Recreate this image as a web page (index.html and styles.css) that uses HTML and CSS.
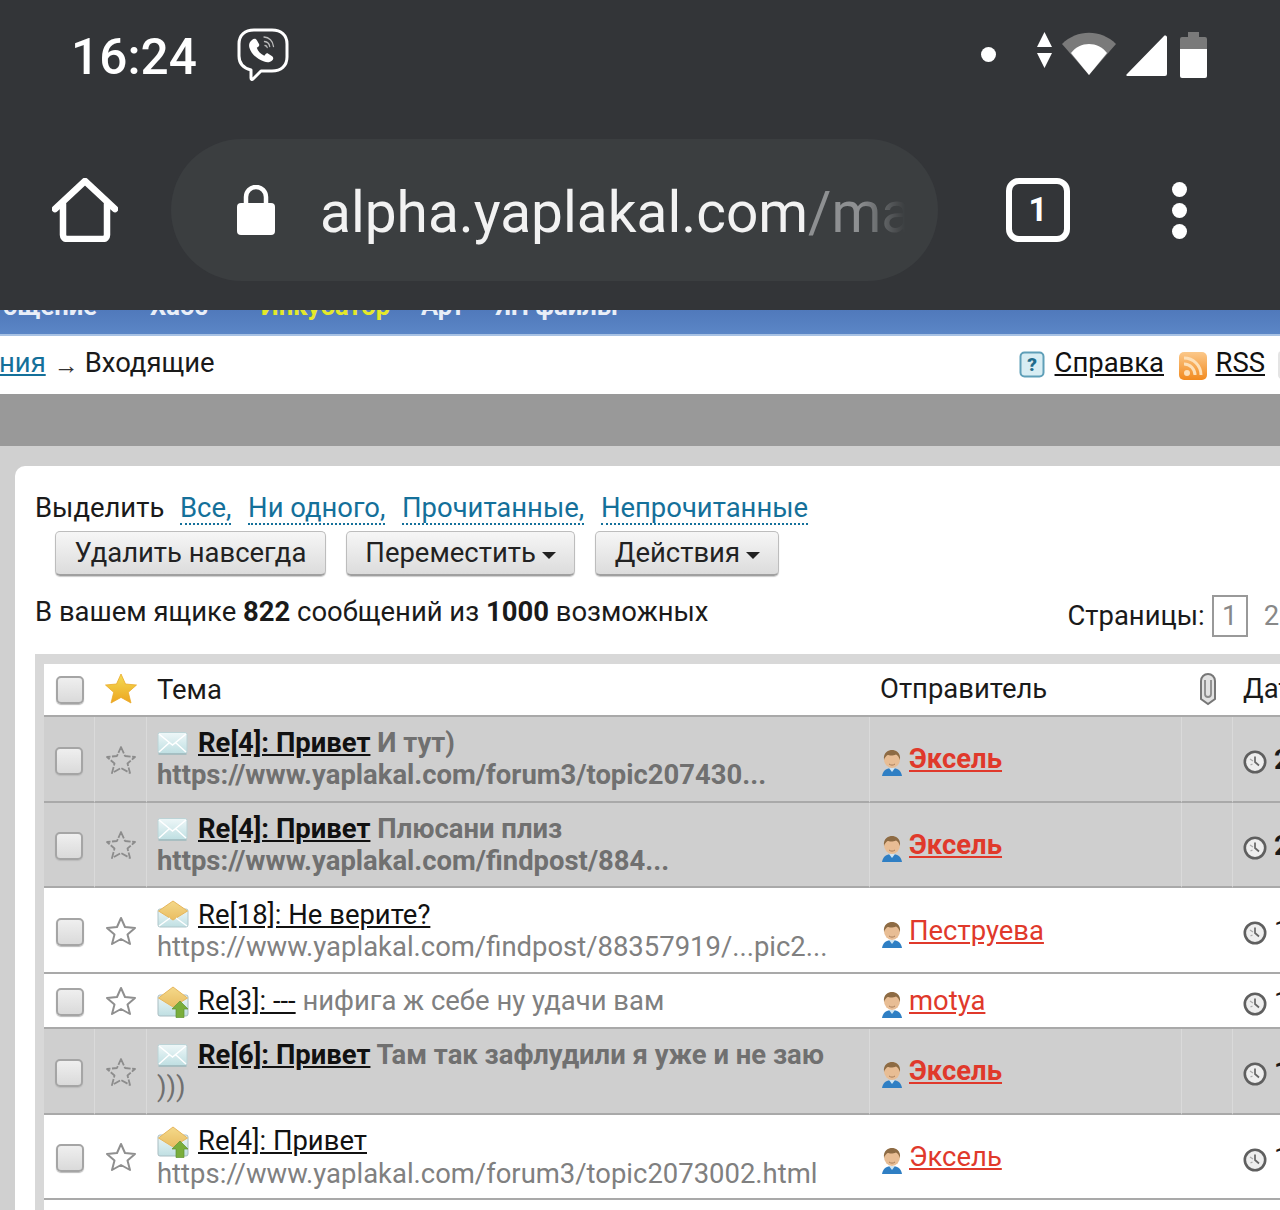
FILE: index.html
```html
<!DOCTYPE html>
<html lang="ru">
<head>
<meta charset="utf-8">
<title>Входящие</title>
<link rel="stylesheet" href="styles.css">
</head>
<body>
<svg class="defs" aria-hidden="true">
  <defs>
    <linearGradient id="gold" x1="0" y1="0" x2="0" y2="1"><stop offset="0" stop-color="#f3dc55"/><stop offset="1" stop-color="#eda51f"/></linearGradient>
    <linearGradient id="env" x1="0" y1="0" x2="0" y2="1"><stop offset="0" stop-color="#eef7f8"/><stop offset="1" stop-color="#bfdfe2"/></linearGradient>
    <linearGradient id="flap" x1="0" y1="0" x2="0" y2="1"><stop offset="0" stop-color="#f4d98a"/><stop offset="1" stop-color="#e9bd62"/></linearGradient>
    <linearGradient id="rss" x1="0" y1="0" x2="0" y2="1"><stop offset="0" stop-color="#fbc88a"/><stop offset="1" stop-color="#f28a1e"/></linearGradient>
    <symbol id="i-star" viewBox="0 0 32 32"><path d="M16 3l4 9 10 1-7.500 6.500L25 29l-9-5-9 5 2.500-9.500L2 13l10-1z" fill="none" stroke="#8f8f8f" stroke-width="2" stroke-linejoin="round"/></symbol>
    <symbol id="i-star-dim" viewBox="0 0 32 32"><path d="M16 3l4 9 10 1-7.500 6.500L25 29l-9-5-9 5 2.500-9.500L2 13l10-1z" fill="none" stroke="#8c8c8c" stroke-width="1.800" stroke-dasharray="7 1.500" stroke-linejoin="round"/></symbol>
    <symbol id="i-star-gold" viewBox="0 0 32 32"><path d="M16 1l4.500 10 11 1-8.200 7.300L26 30l-10-5.600L6 30l2.700-10.700L.5 12l11-1z" fill="url(#gold)" stroke="#eba928" stroke-width=".8" stroke-linejoin="round"/></symbol>
    <symbol id="i-mail" viewBox="0 0 31 25"><rect x="1" y="1.500" width="29" height="21" rx="2" fill="url(#env)" stroke="#bcd3d6"/><path d="M2 3l13.500 11L29 3M2 21l10-9M29 21l-10-9" fill="none" stroke="#fff" stroke-width="1.500"/><path d="M1.500 23h28" stroke="#9db9bc" stroke-width="1.500"/></symbol>
    <symbol id="i-open" viewBox="0 0 32 28"><rect x="1" y="9" width="30" height="18" rx="2" fill="url(#env)" stroke="#b0c6ca"/><path d="M1.500 11L16 1l14.500 10L16 20z" fill="url(#flap)" stroke="#e6b65c" stroke-linejoin="round"/><path d="M2 26l11-8M30 26l-11-8" stroke="#fff" stroke-width="1.500"/></symbol>
    <symbol id="i-reply" viewBox="0 0 32 32"><rect x="1" y="9" width="30" height="21" rx="2" fill="url(#env)" stroke="#a9bdc2"/><path d="M1.500 12L16 1l14.500 11L16 21z" fill="url(#flap)" stroke="#e6b65c" stroke-linejoin="round"/><path d="M23 15l8 8h-4v8.500h-8V23h-4z" fill="#79ad3b" stroke="#5f9430" stroke-width=".7"/></symbol>
    <symbol id="i-user" viewBox="0 0 24 28"><path d="M2 27c1-6 5-8 10-8s9 2 10 8z" fill="#2f7fc4"/><path d="M9 19l3 4 3-4z" fill="#cfe4f2"/><ellipse cx="12" cy="10" rx="8" ry="9" fill="#e8bd94"/><path d="M4 11C3 3 9 1 12 1s9 2 8 10c-1-3-2.500-5-4-5.500-3 1.500-7 1-8.500.5-1 1-3 2.500-3.500 5z" fill="#8d6b44"/><path d="M9 15c2 1.500 4 1.500 6 0" stroke="#a97f5c" fill="none"/></symbol>
    <symbol id="i-clock" viewBox="0 0 24 24"><circle cx="12" cy="12" r="10.200" fill="#eeeeee" stroke="#5f5f5f" stroke-width="2.600"/><path d="M12 6.500V12l4 3.500" fill="none" stroke="#666" stroke-width="1.700"/><path d="M7 9l3 2M7.500 15l2-1" stroke="#aaa" stroke-width="1.300"/></symbol>
    <symbol id="i-clip" viewBox="0 0 20 34"><path d="M3 9a7 7 0 0 1 14 0v18l-7 5-7-5z" fill="#e2e2e2" stroke="#777" stroke-width="2"/><path d="M7 8v14a3 3 0 0 0 6 0V8" fill="none" stroke="#8a8a8a" stroke-width="1.800"/></symbol>
  </defs>
</svg>

<header class="chrome">
  <div class="status">
    <span class="time">16:24</span>
    <svg class="viber" viewBox="0 0 52 54"><path d="M17 2h18c9 0 15 5 15 14v13c0 9-6 14-15 14H24l-8 8c-1 1-2 .5-2-1v-8C6 40 2 36 2 28V16C2 7 8 2 17 2z" fill="none" stroke="#fff" stroke-width="3" stroke-linejoin="round"/><path d="M15 12c2-2 4-1.500 5 .5l2 3.500c.5 1 .3 2-.7 2.700l-1.500 1c1 3.500 4 6.500 7.500 8l1.200-1.500c.8-1 1.800-1.100 2.800-.5l3.500 2.200c1.800 1.200 2 3 .3 4.600-2 2-5 2.300-8 1C19 31 14 25 12.500 20c-1-3-.3-6 2.500-8z" fill="#fff"/><path d="M27 9c5 .3 9 4 9.500 9.500M27.500 13.500c3 .3 4.800 2 5.200 5M28 17.500c1.300.2 2 .9 2.200 2" fill="none" stroke="#bbb" stroke-width="1.300" stroke-linecap="round"/></svg>
    <div class="sysicons">
      <span class="dot"></span>
      <svg class="ic-arrows" viewBox="0 0 17 36"><path d="M8.500 0L16 15H1zM1 21h15L8.500 36z" fill="#fff"/></svg>
      <svg class="ic-wifi" viewBox="0 0 54 43"><path d="M0 12C15-3 39-3 54 12L27 43z" fill="#7a7a7a"/><path d="M9 21C18 9 36 9 45 21L27 43z" fill="#fff"/></svg>
      <svg class="ic-signal" viewBox="0 0 41 41"><path d="M41 2v37a2 2 0 0 1-2 2H2a1 1 0 0 1-1-2L38 1c1-1 3 0 3 1z" fill="#fff"/></svg>
      <svg class="ic-batt" viewBox="0 0 27 46"><path d="M8 0h11v5h6a2 2 0 0 1 2 2v10H0V7a2 2 0 0 1 2-2h6z" fill="#7a7a7a"/><path d="M0 17h27v27a2 2 0 0 1-2 2H2a2 2 0 0 1-2-2z" fill="#fff"/></svg>
    </div>
  </div>
  <div class="toolbar">
    <svg class="ic-home" viewBox="0 0 66 64"><path d="M3 31L33 3l30 28M11 26v31a4 4 0 0 0 4 4h36a4 4 0 0 0 4-4V26" fill="none" stroke="#fff" stroke-width="6.500" stroke-linecap="round" stroke-linejoin="round"/></svg>
    <div class="pill">
      <svg class="ic-lock" viewBox="0 0 38 50"><path d="M9 20v-8a10 10 0 0 1 20 0v8" fill="none" stroke="#fff" stroke-width="4.500"/><rect y="18" width="38" height="32" rx="4" fill="#fff"/></svg>
      <span class="url">alpha.yaplakal.com<span class="url-path">/mail/inbox</span></span>
    </div>
    <span class="tabs">1</span>
    <div class="menu"><span></span><span></span><span></span></div>
  </div>
</header>

<nav class="topnav">
  <a class="nav-wide">ощение</a>
  <a class="nav-wide">Хаос</a>
  <a class="nav-hot">Инкубатор</a>
  <a>Арт</a>
  <a>ЯП файлы</a>
</nav>

<div class="crumbs">
  <div class="crumb-left"><a class="teal">ния</a><span class="arrow">→</span><span>Входящие</span></div>
  <div class="crumb-right">
    <svg class="ic-help" viewBox="0 0 26 28"><rect x="1.500" y="1.500" width="23" height="24" rx="4" fill="#d8edf3" stroke="#5f9fb8" stroke-width="2"/><text x="13" y="20" class="help-q">?</text></svg>
    <a class="ink">Справка</a>
    <svg class="ic-rss" viewBox="0 0 28 28"><rect width="28" height="28" rx="5" fill="url(#rss)"/><circle cx="8" cy="21" r="3" fill="#fde0b8"/><path d="M5 12a11 11 0 0 1 11 11M5 6a17 17 0 0 1 17 17" fill="none" stroke="#fde0b8" stroke-width="3"/></svg>
    <a class="ink">RSS</a>
    <span class="ic-next"></span>
  </div>
</div>

<div class="graybar"></div>

<main class="page">
  <section class="panel">
    <div class="select-row">
      <span class="select-label">Выделить</span>
      <a class="dotted">Все,</a>
      <a class="dotted">Ни одного,</a>
      <a class="dotted">Прочитанные,</a>
      <a class="dotted">Непрочитанные</a>
    </div>
    <div class="actions">
      <button class="btn">Удалить навсегда</button>
      <button class="btn">Переместить<i class="caret"></i></button>
      <button class="btn">Действия<i class="caret"></i></button>
    </div>
    <div class="info-row">
      <p class="info">В вашем ящике <b>822</b> сообщений из <b>1000</b> возможных</p>
      <div class="pager"><span>Страницы:</span><span class="page-cur">1</span><span class="page-num">2</span></div>
    </div>
    <div class="table-wrap">
      <table class="mail">
        <colgroup><col class="c-check"><col class="c-star"><col class="c-subj"><col class="c-from"><col class="c-att"><col class="c-date"></colgroup>
        <thead>
          <tr>
            <th class="center"><span class="box"></span></th>
            <th class="center"><svg class="star"><use href="#i-star-gold"/></svg></th>
            <th class="subj">Тема</th>
            <th class="from">Отправитель</th>
            <th class="center"><svg class="clip"><use href="#i-clip"/></svg></th>
            <th class="date">Дата</th>
          </tr>
        </thead>
        <tbody>
          <tr class="unread">
            <td class="center"><span class="box"></span></td>
            <td class="center"><svg class="star"><use href="#i-star-dim"/></svg></td>
            <td class="subj"><svg class="mi"><use href="#i-mail"/></svg><a class="title">Re[4]: Привет</a> <span class="snip">И тут)<br>https://www.yaplakal.com/forum3/topic207430...</span></td>
            <td class="from"><svg class="user"><use href="#i-user"/></svg><a class="sender">Эксель</a></td>
            <td></td>
            <td class="date"><svg class="clock"><use href="#i-clock"/></svg><span>24.09.2019</span></td>
          </tr>
          <tr class="unread">
            <td class="center"><span class="box"></span></td>
            <td class="center"><svg class="star"><use href="#i-star-dim"/></svg></td>
            <td class="subj"><svg class="mi"><use href="#i-mail"/></svg><a class="title">Re[4]: Привет</a> <span class="snip">Плюсани плиз<br>https://www.yaplakal.com/findpost/884...</span></td>
            <td class="from"><svg class="user"><use href="#i-user"/></svg><a class="sender">Эксель</a></td>
            <td></td>
            <td class="date"><svg class="clock"><use href="#i-clock"/></svg><span>23.09.2019</span></td>
          </tr>
          <tr>
            <td class="center"><span class="box"></span></td>
            <td class="center"><svg class="star"><use href="#i-star"/></svg></td>
            <td class="subj"><svg class="mi open"><use href="#i-open"/></svg><a class="title">Re[18]: Не верите?</a><br><span class="snip">https://www.yaplakal.com/findpost/88357919/...pic2...</span></td>
            <td class="from"><svg class="user"><use href="#i-user"/></svg><a class="sender">Пеструева</a></td>
            <td></td>
            <td class="date"><svg class="clock"><use href="#i-clock"/></svg><span>19.09.2019</span></td>
          </tr>
          <tr class="single">
            <td class="center"><span class="box"></span></td>
            <td class="center"><svg class="star"><use href="#i-star"/></svg></td>
            <td class="subj"><svg class="mi reply"><use href="#i-reply"/></svg><a class="title">Re[3]: ---</a> <span class="snip">нифига ж себе ну удачи вам</span></td>
            <td class="from"><svg class="user"><use href="#i-user"/></svg><a class="sender">motya</a></td>
            <td></td>
            <td class="date"><svg class="clock"><use href="#i-clock"/></svg><span>18.09.2019</span></td>
          </tr>
          <tr class="unread">
            <td class="center"><span class="box"></span></td>
            <td class="center"><svg class="star"><use href="#i-star-dim"/></svg></td>
            <td class="subj"><svg class="mi"><use href="#i-mail"/></svg><a class="title">Re[6]: Привет</a> <span class="snip">Там так зафлудили я уже и не заю<br><span class="plain">)))</span></span></td>
            <td class="from"><svg class="user"><use href="#i-user"/></svg><a class="sender">Эксель</a></td>
            <td></td>
            <td class="date"><svg class="clock"><use href="#i-clock"/></svg><span>17.09.2019</span></td>
          </tr>
          <tr>
            <td class="center"><span class="box"></span></td>
            <td class="center"><svg class="star"><use href="#i-star"/></svg></td>
            <td class="subj"><svg class="mi reply"><use href="#i-reply"/></svg><a class="title">Re[4]: Привет</a><br><span class="snip">https://www.yaplakal.com/forum3/topic2073002.html</span></td>
            <td class="from"><svg class="user"><use href="#i-user"/></svg><a class="sender">Эксель</a></td>
            <td></td>
            <td class="date"><svg class="clock"><use href="#i-clock"/></svg><span>16.09.2019</span></td>
          </tr>
          <tr>
            <td class="center"><span class="box"></span></td>
            <td class="center"><svg class="star"><use href="#i-star"/></svg></td>
            <td class="subj"><svg class="mi reply"><use href="#i-reply"/></svg><a class="title">Re[2]: Привет</a></td>
            <td class="from"></td>
            <td></td>
            <td class="date"></td>
          </tr>
        </tbody>
      </table>
    </div>
  </section>
</main>
</body>
</html>
```
FILE: styles.css
```css
* { box-sizing: border-box; }
html, body { margin: 0; padding: 0; }
body {
  width: 1280px;
  height: 1210px;
  overflow: hidden;
  background: #d0d0d0;
  font-family: Roboto, "Noto Sans", sans-serif;
  font-size: 27.45px;
  line-height: 32px;
  color: #1a1a1a;
}
.defs { display: block; width: 0; height: 0; }

/* phone chrome */
.chrome { height: 310px; background: #333538; display: flex; flex-direction: column; position: relative; z-index: 1; }
.status { height: 110px; display: flex; align-items: center; padding-left: 71px; }
.time { font-size: 49.5px; line-height: 56px; color: #fff; font-weight: 500; letter-spacing: .1px; margin-top: 4px; width: 126px; }
.viber { width: 52px; height: 54px; margin-left: 40px; }
.sysicons { display: flex; align-items: flex-start; margin-left: auto; width: 226px; height: 46px; margin-right: 73px; }
.dot { width: 15px; height: 15px; border-radius: 50%; background: #fff; margin: 15px 0 0 0; }
.ic-arrows { width: 17px; height: 36px; margin-left: 40px; }
.ic-wifi { width: 54px; height: 43px; margin-left: 9px; }
.ic-signal { width: 41px; height: 41px; margin-left: 10px; margin-top: 3px; }
.ic-batt { width: 27px; height: 46px; margin-left: 13px; }

.toolbar { display: flex; align-items: center; height: 142px; margin-top: 29px; padding-left: 52px; }
.ic-home { width: 66px; height: 64px; flex: none; }
.pill { width: 767px; height: 142px; margin-left: 53px; border-radius: 71px; background: #3b3e40; display: flex; align-items: center; padding-left: 66px; flex: none; }
.ic-lock { width: 38px; height: 50px; flex: none; }
.url {
  width: 585px; margin: 5px 0 0 45px; white-space: nowrap; overflow: hidden; color: #f2f2f2;
  font-size: 56.8px; line-height: 70px;
  -webkit-mask-image: linear-gradient(to right, #000 92%, transparent 100%);
  mask-image: linear-gradient(to right, #000 92%, transparent 100%);
}
.url-path { color: #8e9092; }
.tabs { width: 64px; height: 64px; margin-left: 68px; border: 6px solid #fff; border-radius: 13px; color: #fff; font-size: 33px; font-weight: 700; line-height: 52px; text-align: center; flex: none; }
.menu { display: flex; flex-direction: column; gap: 6px; margin-left: 102px; }
.menu span { width: 15px; height: 15px; border-radius: 50%; background: #fff; }

/* site nav */
.topnav {
  height: 26px; background: linear-gradient(#5079bb, #5b86c6); border-bottom: 2px solid #a8c2e4;
  display: flex; align-items: flex-end; overflow: hidden; padding: 0 0 12px 3px; gap: 31px;
  font-size: 25.6px; font-weight: 700; color: #e9eef7; white-space: nowrap;
}
.topnav a { flex: none; }
.topnav .nav-wide { margin-right: 22px; }
.topnav .nav-hot { color: #e4e82a; }

.crumbs { height: 58px; background: #fff; display: flex; align-items: center; }
.crumb-left { flex: 1 1 0; display: flex; align-items: center; margin: 0 0 4px -1px; }
.teal { color: #14709a; text-decoration: underline; }
.arrow { font-size: 25px; color: #333; margin: 5px 6px 0 8px; }
.crumb-right { flex: none; display: flex; align-items: center; margin-right: -26px; }
.ink { color: #111; text-decoration: underline; margin-bottom: 4px; }
.ic-help { width: 26px; height: 28px; margin-right: 10px; }
.help-q { font: 900 19px Roboto, sans-serif; fill: #1f6c8c; text-anchor: middle; }
.ic-rss { width: 28px; height: 28px; margin: 2px 9px 0 14.5px; }
.ic-next { width: 28px; height: 28px; margin-left: 13px; background: #e4e4e4; border-radius: 4px; }

.graybar { height: 52px; background: #999; }

/* content */
.page { padding: 20px 0 0 15px; }
.panel { width: 1400px; height: 800px; background: #fff; border-radius: 10px 0 0 0; padding: 24px 0 0 20px; }
.select-row { display: flex; gap: 16.7px; height: 36px; align-items: center; }
.dotted { color: #14709a; border-bottom: 2px dotted #14709a; line-height: 30px; margin-top: 2px; }
.select-label { margin-right: -1px; }
.actions { display: flex; gap: 20px; margin: 5px 0 0 20px; }
.btn {
  height: 45px; padding: 0 18.5px; font: inherit; color: #222; line-height: 40px;
  background: linear-gradient(#f6f6f6, #dcdcdc); border: 1px solid #bdbdbd; border-bottom: 2px solid #a0a0a0;
  border-radius: 5px; display: flex; align-items: center; box-shadow: 0 1px 1px #ccc;
}
.caret { width: 0; height: 0; margin: 4px 0 0 6px; border-left: 7px solid transparent; border-right: 7px solid transparent; border-top: 7px solid #222; }
.info-row { display: flex; align-items: flex-start; gap: 359px; margin-top: 20px; }
.info { margin: 0; white-space: nowrap; flex: none; }
.info b { font-weight: 700; }
.pager { display: flex; align-items: center; flex: none; margin-top: -1px; }
.page-cur { width: 36px; height: 42px; margin-left: 7px; border: 2px solid #999; color: #888; text-align: center; line-height: 38px; }
.page-num { margin-left: 16px; color: #888; }

.table-wrap { margin-top: 17px; background: #d8d8d8; padding: 10px 0 0 9px; width: 1380px; }
.mail { width: 1370px; border-collapse: separate; border-spacing: 0; table-layout: fixed; background: #fff; }
.c-check { width: 51px; }
.c-star { width: 52px; }
.c-subj { width: 723px; }
.c-from { width: 312px; }
.c-att { width: 51px; }
.mail th { height: 53px; font-weight: 400; text-align: left; border-bottom: 2px solid #a9a9a9; padding: 0 0 2px; }
.mail td { height: 85.7px; padding: 0; border-bottom: 2px solid #a9a9a9; vertical-align: middle; }
.mail .single td { height: 55px; }
.center { text-align: center !important; }
.mail .subj { padding: 0 10px; }
.mail td.subj { padding-top: 1px; }
.mail .from { padding-left: 10px; }
.mail td.from { padding-top: 3px; }
.mail .date { padding-left: 10px; white-space: nowrap; }
.mail td.date { padding-top: 2px; }
.unread td { background: #cfcfcf; border-right: 1px solid #dadada; font-weight: 700; }
.box {
  display: inline-block; width: 28px; height: 28px; vertical-align: middle; border-radius: 5px;
  background: linear-gradient(#efefef, #dadada); border: 2px solid #a5a5a5; box-shadow: 0 1px 1px #bbb;
}
.star { width: 32px; height: 32px; vertical-align: middle; }
.clip { width: 20px; height: 34px; vertical-align: middle; }
.mi { width: 31px; height: 25px; margin-right: 10px; vertical-align: -4px; }
.mi.open { height: 28px; width: 32px; margin-right: 9px; vertical-align: -4px; }
.mi.reply { height: 32px; width: 32px; margin-right: 9px; vertical-align: -8px; }
.title { color: #111; text-decoration: underline; }
.snip { color: #808080; }
.unread .snip { color: #707070; }
.plain { font-weight: 400; }
.user { width: 24px; height: 28px; margin-right: 5px; vertical-align: -9px; }
.sender { color: #e0392b; text-decoration: underline; }
.clock { width: 24px; height: 24px; margin-right: 7px; vertical-align: -5px; }
```
